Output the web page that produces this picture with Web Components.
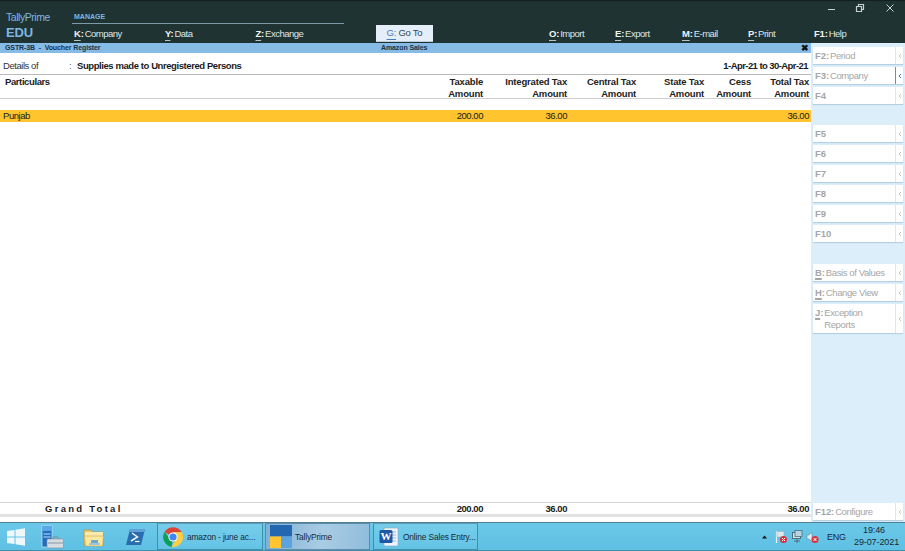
<!DOCTYPE html>
<html>
<head>
<meta charset="utf-8">
<title>TallyPrime</title>
<style>
  html, body { margin: 0; padding: 0; height: 100%; overflow: hidden; }
  body { font: 10px "Liberation Sans", Arial, sans-serif; }
</style>
</head>
<body>
<tally-app>
  <tally-header slot="header"></tally-header>
  <report-view slot="report"></report-view>
  <side-panel slot="side">
    <side-button key="F2" label="Period"></side-button>
    <side-button key="F3" label="Company" active></side-button>
    <side-button key="F4"></side-button>
    <side-button key="F5" class="gap"></side-button>
    <side-button key="F6"></side-button>
    <side-button key="F7"></side-button>
    <side-button key="F8"></side-button>
    <side-button key="F9"></side-button>
    <side-button key="F10"></side-button>
    <side-button key="B" label="Basis of Values" underline class="gap2"></side-button>
    <side-button key="H" label="Change View" underline></side-button>
    <side-button key="J" label="Exception Reports" underline tall></side-button>
    <side-button key="F12" label="Configure" class="end"></side-button>
  </side-panel>
</tally-app>
<win-taskbar></win-taskbar>

<script>
/* small helper: class body is only a template + optional render */
function shadow(el, html) {
  el.attachShadow({ mode: "open" }).innerHTML = html;
  return el.shadowRoot;
}

class TallyApp extends HTMLElement {
  constructor() {
    super();
    shadow(this, `
      <style>
        :host { display: grid; grid-template-columns: 811px 94px; grid-template-rows: 43px 479px; background: #fff; }
        .head { grid-column: 1 / 3; }
      </style>
      <div class="head"><slot name="header"></slot></div>
      <slot name="report"></slot>
      <slot name="side"></slot>`);
  }
}

class NavItem extends HTMLElement {
  constructor() {
    super();
    const key = this.getAttribute("key");
    const u = this.hasAttribute("plain") ? key : `<u>${key[0]}</u>${key.slice(1)}`;
    shadow(this, `
      <style>
        :host { display: flex; gap: 1px; color: #dfe6e6; font-size: 9.500px; letter-spacing: -.5px; white-space: nowrap; }
        b { font-weight: 700; color: #f2f5f5; letter-spacing: -.2px; }
        u { text-decoration-thickness: 1px; text-underline-offset: 2.500px; text-decoration-color: #b8c4c4; }
      </style>
      <b>${u}:</b><span><slot></slot></span>`);
  }
}

class TallyHeader extends HTMLElement {
  constructor() {
    super();
    shadow(this, `
      <style>
        :host { display: flex; height: 43px; box-sizing: border-box; background: #1f3333; border-top: 1px solid #141f1f; position: relative; }
        .logo { width: 72px; padding: 10px 0 0 6px; box-sizing: border-box; color: #7fb6e0; }
        .logo div { font-size: 10.500px; line-height: 12px; letter-spacing: -.45px; }
        .logo strong { display: block; font-size: 13px; line-height: 16px; margin-top: 2px; letter-spacing: -.2px; }
        .manage { width: 272px; }
        .manage h4 { margin: 11px 0 0; padding: 0 0 0 2px; font-size: 7px; line-height: 10px; color: #7fb6e0; border-bottom: 1px solid #7a9aa8; height: 12px; box-sizing: border-box; }
        .row { display: grid; grid-template-columns: 91px 90.500px 1fr; padding: 4px 0 0 2px; }
        .goto { margin: 24px 0 0 32px; width: 57px; height: 17px; box-sizing: border-box; background: #e4effa; color: #33475a; text-align: center; line-height: 16px; font-size: 9.500px; letter-spacing: -.25px; border-bottom: 1px solid #bcd; }
        .goto u { color: #4a7db0; text-underline-offset: 2.500px; }
        .right { display: grid; grid-template-columns: 66px 67px 66px 66px 60px; margin: 27px 0 0 116px; height: 14px; }
        .win { position: absolute; top: 0; right: 0; display: flex; }
        .win svg { display: block; }
      </style>
      <div class="logo"><div>TallyPrime</div><strong>EDU</strong></div>
      <div class="manage">
        <h4>MANAGE</h4>
        <div class="row">
          <nav-item key="K">Company</nav-item>
          <nav-item key="Y">Data</nav-item>
          <nav-item key="Z">Exchange</nav-item>
        </div>
      </div>
      <div class="goto"><u>G:</u> Go To</div>
      <div class="right">
        <nav-item key="O">Import</nav-item>
        <nav-item key="E">Export</nav-item>
        <nav-item key="M">E-mail</nav-item>
        <nav-item key="P">Print</nav-item>
        <nav-item key="F1" plain>Help</nav-item>
      </div>
      <div class="win">
        <svg width="90" height="16" viewBox="0 0 90 16" fill="none" stroke="#c9d2d2">
          <path d="M13 8.500h7"/>
          <path d="M41.500 5.500h5v5h-5zM43.500 5.500v-2h5v5h-2" stroke-width="1.200"/>
          <path d="M71.500 3.500l7 7M78.500 3.500l-7 7"/>
        </svg>
      </div>`);
  }
}

class ReportRow extends HTMLElement {
  constructor() {
    super();
    shadow(this, `
      <style>
        :host { display: grid; grid-template-columns: 403px 80px 84px 69px 68px 47px 58px; padding-right: 2px; box-sizing: border-box; width: 811px; }
        ::slotted(*) { text-align: right; }
        ::slotted(:first-child) { text-align: left; }
      </style>
      <slot></slot>`);
  }
}

class ReportView extends HTMLElement {
  constructor() {
    super();
    shadow(this, `
      <style>
        :host { display: flex; flex-direction: column; background: #fff; color: #1b1b1b; font-size: 9.500px; letter-spacing: -.45px; min-height: 0; }
        .bar { height: 10px; background: #85bbe5; display: flex; justify-content: space-between; font-size: 7px; font-weight: 700; line-height: 10px; color: #17324a; padding: 0 2px 0 5px; position: relative; width: 811px; box-sizing: border-box; letter-spacing: -.1px; }
        .bar .mid { position: absolute; left: 381px; }
        .bar .x { font-size: 9px; color: #111; }
        .details { height: 22px; display: flex; align-items: center; padding: 3px 3px 0 3px; box-sizing: border-box; border-bottom: 1px solid #b9b9b9; }
        .details .lbl { width: 66px; color: #333; }
        .details .colon { width: 8px; color: #555; }
        .details b { font-weight: 700; letter-spacing: -.42px; }
        .details .date { margin-left: auto; font-weight: 700; letter-spacing: -.57px; }
        .head { height: 24px; border-bottom: 1px solid #cfcfcf; box-sizing: border-box; font-weight: 700; line-height: 11.500px; padding-top: 1px; color: #222; letter-spacing: -.18px; }
        .head span:first-child { padding-left: 5px; letter-spacing: -.4px; }
        .sel { margin-top: 11px; height: 12px; background: #ffc42e; line-height: 12px; color: #222; }
        .sel span:first-child { padding-left: 3px; }
        .fill { flex: 1; }
        .total { height: 12px; box-sizing: border-box; border-top: 1px solid #d4d4d4; font-weight: 700; line-height: 11px; }
        .total span:first-child { padding-left: 45px; letter-spacing: 2.270px; }
        .band { height: 3px; background: #e2e2e2; }
        .foot { height: 5px; }
      </style>
      <div class="bar"><span>GSTR-3B &nbsp;-&nbsp; Voucher Register</span><span class="mid">Amazon Sales</span><span class="x">✖</span></div>
      <div class="details"><span class="lbl">Details of</span><span class="colon">:</span><b>Supplies made to Unregistered Persons</b><span class="date">1-Apr-21 to 30-Apr-21</span></div>
      <report-row class="head">
        <span>Particulars</span>
        <span>Taxable<br>Amount</span>
        <span>Integrated Tax<br>Amount</span>
        <span>Central Tax<br>Amount</span>
        <span>State Tax<br>Amount</span>
        <span>Cess<br>Amount</span>
        <span>Total Tax<br>Amount</span>
      </report-row>
      <report-row class="sel">
        <span>Punjab</span><span>200.00</span><span>36.00</span><span></span><span></span><span></span><span>36.00</span>
      </report-row>
      <div class="fill"></div>
      <report-row class="total">
        <span>Grand Total</span><span>200.00</span><span>36.00</span><span></span><span></span><span></span><span>36.00</span>
      </report-row>
      <div class="band"></div>
      <div class="foot"></div>`);
  }
}

class SidePanel extends HTMLElement {
  constructor() {
    super();
    shadow(this, `
      <style>
        :host { display: flex; flex-direction: column; gap: 3px; height: 479px; box-sizing: border-box; padding: 4px 2px 2px 2px; background: #dceefa; }
        ::slotted(.gap) { margin-top: 18px; }
        ::slotted(.gap2) { margin-top: 19px; }
        ::slotted(.end) { margin-top: auto; }
      </style>
      <slot></slot>`);
  }
}

class SideButton extends HTMLElement {
  constructor() {
    super();
    const key = this.getAttribute("key");
    const label = this.getAttribute("label");
    const tall = this.hasAttribute("tall");
    const keyHtml = this.hasAttribute("underline") ? `<u>${key}</u>` : key;
    const text = label ? `<b>${keyHtml}:</b><span>${label}</span>` : `<b>${keyHtml}</b>`;
    shadow(this, `
      <style>
        :host { display: block; height: ${tall ? 29 : 17}px; }
        .btn { height: 100%; box-sizing: border-box; display: flex; background: #fff; box-shadow: 0 1px 1px #b5cfe2; color: #a6a6a6; font-size: 9.500px; letter-spacing: -.4px; line-height: ${tall ? 12 : 17}px; }
        .txt { flex: 1; display: flex; gap: 1px; padding: ${tall ? "3px" : "0"} 0 0 2px; }
        b { font-weight: 700; white-space: nowrap; letter-spacing: -.1px; }
        u { text-decoration-thickness: 1.500px; text-underline-offset: 1.500px; }
        span { white-space: normal; }
        .arr { width: 8px; border-left: 1px solid #e0e6ea; display: flex; align-items: center; justify-content: center; box-sizing: border-box; }
        :host([active]) .arr { border-left: 1px solid #5f93c8; }
        :host([active]) path { stroke: #3f78b5; }
      </style>
      <div class="btn">
        <div class="txt">${text}</div>
        <div class="arr"><svg width="4" height="6" viewBox="0 0 4 6"><path d="M3 1L1 3l2 2" fill="none" stroke="#c4c4c4"/></svg></div>
      </div>`);
  }
}

class TaskButton extends HTMLElement {
  constructor() {
    super();
    shadow(this, `
      <style>
        :host { display: flex; align-items: center; box-sizing: border-box; height: 27px; font-size: 8.400px; letter-spacing: -.15px; color: #1b2a33; border: 1px solid #3f8fab; border-top-color: #5a9cb4; background: linear-gradient(#76cdea, #63c3e5); white-space: nowrap; overflow: hidden; margin-top: 0; }
        :host([active]) { background: linear-gradient(100deg, #7fb0d6, #a9cce4 55%, #8fbcdc); border-color: #5f8ba8; }
        .ic { display: flex; align-items: center; justify-content: center; flex: none; width: var(--ic, 32px); }
      </style>
      <div class="ic"><slot name="icon"></slot></div><slot></slot>`);
  }
}

class TrayIcons extends HTMLElement {
  constructor() {
    super();
    const x = (cx, cy) => `<circle cx="${cx}" cy="${cy}" r="3.500" fill="#d8323f"/><path d="M${cx-1.5} ${cy-1.5}l3 3M${cx+1.5} ${cy-1.5}l-3 3" stroke="#fff" stroke-width="1"/>`;
    shadow(this, `
      <style>:host { display: block; width: 66px; height: 16px; } svg { display: block; }</style>
      <svg width="66" height="16" viewBox="0 0 66 16">
        <path d="M1 9.500l2.500-3 2.500 3z" fill="#111"/>
        <path d="M15.500 2v12" stroke="#e8f2f6" stroke-width="1.200"/>
        <path d="M16 2.500h7v5.500h-7z" fill="#dbe8ee" stroke="#8aa" stroke-width=".5"/>
        ${x(22.5, 10.5)}
        <rect x="31.500" y="3.500" width="8" height="6" fill="#cfe2ea" stroke="#4d6e7c"/>
        <rect x="34" y="1.500" width="7" height="6" fill="#b8d4de" stroke="#4d6e7c" stroke-width=".8"/>
        <path d="M33 12h6M36 10v4" stroke="#4d6e7c"/>
        <path d="M46 6h2l3-3v10l-3-3h-2z" fill="#e4eef2" stroke="#71838c" stroke-width=".6"/>
        ${x(54, 10.5)}
      </svg>`);
  }
}

class WinTaskbar extends HTMLElement {
  constructor() {
    super();
    shadow(this, `
      <style>
        :host { display: flex; height: 29px; box-sizing: border-box; background: linear-gradient(#6cc8e8, #5fc0e4); border-top: 1px solid #4f7f94; border-bottom: 1px solid #3f8fab; color: #1b2a33; font-family: "Liberation Sans", Arial, sans-serif; }
        .pin { display: flex; align-items: center; justify-content: center; flex: none; height: 27px; }
        .sp { flex: 1; }
        .tray { display: flex; align-items: center; width: 144px; flex: none; font-size: 9px; }
        .lang { width: 27px; letter-spacing: -.3px; }
        .clock { text-align: center; width: 40px; line-height: 11.500px; white-space: nowrap; letter-spacing: -.1px; }
        task-button { flex: none; }
      </style>
      <div class="pin" style="width:32px">
        <svg width="18" height="18" viewBox="0 0 18 18" fill="#eef8fc"><path d="M0 3l7.500-1.100v6.600H0zM8.500 1.700L18 .3v8.200H8.500zM0 9.500h7.500v6.600L0 15zM8.500 9.500H18v8.200l-9.500-1.400z"/></svg>
      </div>
      <div class="pin" style="width:41px">
        <svg width="23" height="24" viewBox="0 0 23 24">
          <rect x="1" y="1" width="10" height="21" fill="#1f6fc0" stroke="#cfe8f7" stroke-width=".7"/><rect x="1" y="1" width="10" height="5" fill="#5aa6e6"/>
          <path d="M2.500 9h7M2.500 12h7" stroke="#bfe0f7"/>
          <rect x="6" y="14" width="16.500" height="9" rx="1" fill="#d6dde2" stroke="#7f8f9a" stroke-width=".6"/>
          <path d="M12 14v-2h5v2" fill="none" stroke="#7f8f9a"/><path d="M7 18h15" stroke="#8696a0"/>
        </svg>
      </div>
      <div class="pin" style="width:41px">
        <svg width="22" height="20" viewBox="0 0 22 20">
          <path d="M1 3h7l2 2h10v13H1z" fill="#e9c765" stroke="#b79237" stroke-width=".6"/>
          <path d="M2 5h18v4H2z" fill="#f8e9ae"/>
          <path d="M1.500 9h19l-1 10h-17z" fill="#fbe79d" stroke="#c9a64c" stroke-width=".6"/>
          <path d="M8 13h7v3H8z" fill="#6ea9cf"/><path d="M6 16h11v2H6z" fill="#9cc6de"/>
        </svg>
      </div>
      <div class="pin" style="width:43px">
        <svg width="19" height="18" viewBox="0 0 19 18">
          <path d="M4 1h15l-4 16H0z" fill="#2a6cb0"/><path d="M4 1h15l-.8 3H3.200z" fill="#5fa2d8"/>
          <path d="M6 5l5.500 4-6.500 4" fill="none" stroke="#eef6fb" stroke-width="1.500"/><path d="M9 13.500h4.500" stroke="#eef6fb" stroke-width="1.300"/>
        </svg>
      </div>
      <task-button style="width:106px;--ic:29px">
        <svg slot="icon" width="20" height="20" viewBox="0 0 20 20">
          <path d="M10 10L1.500 5.100A10 10 0 0 1 18.700 5H10z" fill="#db4437"/>
          <path d="M10 10l-4.300-.1L1.500 5A10 10 0 0 0 8.600 19.900z" fill="#0f9d58"/>
          <path d="M10 5h8.700A10 10 0 0 1 8.600 19.900L14.300 10z" fill="#ffcd40"/>
          <circle cx="10" cy="10" r="4.600" fill="#fff"/><circle cx="10" cy="10" r="3.600" fill="#4285f4"/>
        </svg>
        amazon - june ac...
      </task-button>
      <task-button active style="width:105px;margin-left:2px;--ic:29px">
        <svg slot="icon" width="22" height="23" viewBox="0 0 22 23"><rect width="22" height="11.500" fill="#2467b1"/><rect y="11.500" width="11" height="11.500" fill="#ffc42e"/><rect x="11" y="11.500" width="11" height="11.500" fill="#5aa3df"/></svg>
        TallyPrime
      </task-button>
      <task-button style="width:105px;margin-left:3px;--ic:29px">
        <svg slot="icon" width="20" height="20" viewBox="0 0 20 20">
          <rect x="5" y="1" width="14" height="18" rx="1" fill="#eef4fa" stroke="#8aa6c2" stroke-width=".6"/>
          <path d="M8 5h9M12 8h5M12 11h5M8 14h9" stroke="#9db7d1"/>
          <rect x="0.500" y="3" width="13" height="13" rx="1.500" fill="#1f57a8"/>
          <text x="7" y="13" font-family="Liberation Serif" font-weight="700" font-size="11" fill="#fff" text-anchor="middle">W</text>
        </svg>
        Online Sales Entry...
      </task-button>
      <div class="sp"></div>
      <div class="tray">
        <tray-icons></tray-icons>
        <div class="lang">ENG</div>
        <div class="clock">19:46<br>29-07-2021</div>
      </div>`);
  }
}

// children first, so nested tags upgrade in order
customElements.define("nav-item", NavItem);
customElements.define("tally-header", TallyHeader);
customElements.define("report-row", ReportRow);
customElements.define("report-view", ReportView);
customElements.define("side-button", SideButton);
customElements.define("side-panel", SidePanel);
customElements.define("tally-app", TallyApp);
customElements.define("task-button", TaskButton);
customElements.define("tray-icons", TrayIcons);
customElements.define("win-taskbar", WinTaskbar);
</script>
</body>
</html>
